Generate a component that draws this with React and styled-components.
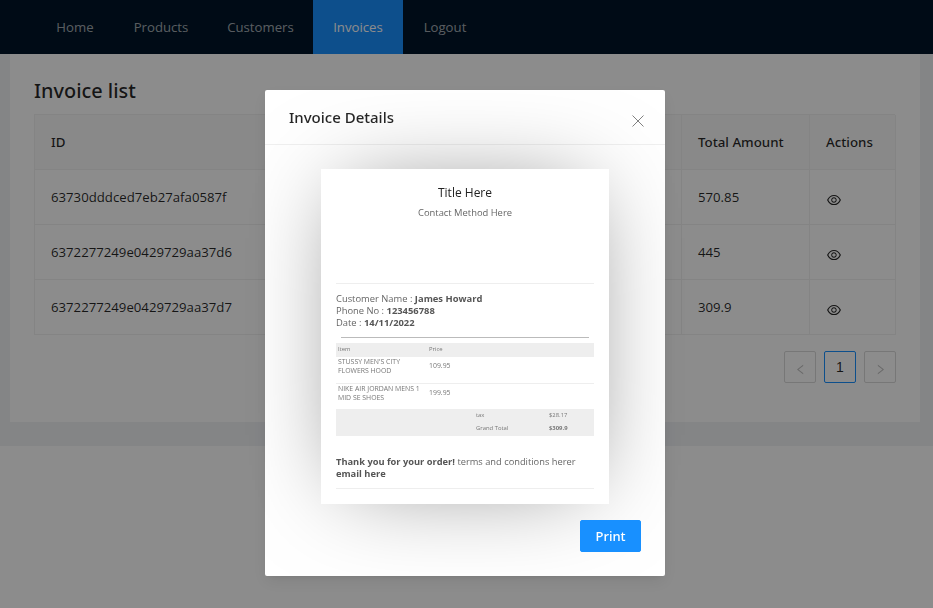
import styled, { createGlobalStyle } from 'styled-components'
import { AiOutlineEye, AiOutlineLeft, AiOutlineRight } from 'react-icons/ai'

const GlobalStyle = createGlobalStyle`
    html, body {
        margin: 0;
        height: 100%;
        overflow: hidden;
        background: #f0f2f5;
        font-family: "Open Sans", "Noto Sans", sans-serif;
        color: rgba(0, 0, 0, 0.85);
    }
    * { box-sizing: border-box; }
`

const Nav = styled.nav`
    display: flex;
    height: 54px;
    padding-left: 36px;
    background: #001529;
`

const NavItem = styled.a`
    display: flex;
    align-items: center;
    justify-content: center;
    height: 100%;
    width: ${props => props.$width}px;
    font-size: 13.2px;
    color: ${props => props.$active ? '#fff' : 'rgba(255, 255, 255, 0.65)'};
    background: ${props => props.$active ? '#1890ff' : 'transparent'};
`

const Panel = styled.main`
    height: 368px;
    margin: 0 13px 24px 10px;
    padding: 24px 24px 0;
    background: #fff;
`

const PageTitle = styled.h2`
    margin: 0 0 8px;
    height: 28px;
    font-family: "Noto Sans", sans-serif;
    font-size: 19.9px;
    line-height: 26px;
    font-weight: 500;
`

const Table = styled.div`
    display: grid;
    grid-template-columns: 647px 128px 86px;
    border-top: 1px solid #f0f0f0;
    border-left: 1px solid #f0f0f0;
    width: 861px;
`

const Cell = styled.div`
    display: flex;
    align-items: center;
    height: 55px;
    padding: 0 16px;
    font-family: ${props => props.$head ? '"Noto Sans", sans-serif' : 'inherit'};
    font-size: ${props => props.$head ? 13.3 : 13.2}px;
    font-weight: ${props => props.$head ? 500 : 400};
    background: ${props => props.$head ? '#fafafa' : '#fff'};
    border-right: 1px solid #f0f0f0;
    border-bottom: 1px solid #f0f0f0;
    svg { font-size: 16px; margin-top: 5px; }
`

const Row = styled.div`
    display: contents;
`

const Pager = styled.div`
    display: flex;
    justify-content: flex-end;
    gap: 8px;
    margin-top: 16px;
    width: 862px;
`

const PageButton = styled.div`
    display: flex;
    align-items: center;
    justify-content: center;
    width: 32px;
    height: 32px;
    border: 1px solid ${props => props.$active ? '#1890ff' : '#d9d9d9'};
    border-radius: 2px;
    font-family: "Liberation Sans", sans-serif;
    font-size: 14px;
    color: ${props => props.$active ? 'rgba(0, 0, 0, 0.85)' : 'rgba(0, 0, 0, 0.25)'};
    svg { font-size: 13px; margin-top: 5px; }
`

const Footer = styled.footer`
    height: 162px;
    background: #fff;
`

const Mask = styled.div`
    position: fixed;
    inset: 0;
    background: rgba(0, 0, 0, 0.45);
`

const Modal = styled.div`
    position: fixed;
    top: 90px;
    left: 265px;
    width: 400px;
    height: 486px;
    background: #fff;
    border-radius: 2px;
    box-shadow: 0 3px 6px -4px rgba(0, 0, 0, 0.12), 0 6px 16px rgba(0, 0, 0, 0.08);
`

const ModalHeader = styled.div`
    height: 55px;
    padding: 16px 24px;
    border-bottom: 1px solid #f0f0f0;
    font-family: "Noto Sans", sans-serif;
    font-size: 15px;
    line-height: 22px;
    font-weight: 500;
`

const CloseButton = styled.svg`
    position: absolute;
    top: 25px;
    right: 21px;
    width: 12px;
    height: 12px;
    stroke: #808080;
    stroke-width: 1;
    fill: none;
`

const ModalBody = styled.div`
    display: flex;
    justify-content: center;
    padding-top: 24px;
`

const Receipt = styled.div`
    width: 288px;
    height: 335px;
    padding: 16px 15px 0;
    background: #fff;
    color: #444;
    box-shadow: 0 0 96px -24px rgba(0, 0, 0, 0.5);
`

const ReceiptTitle = styled.div`
    font-size: 12px;
    line-height: 16px;
    text-align: center;
    color: #222;
`

const Contact = styled.div`
    margin-top: 5px;
    font-size: 9.4px;
    line-height: 14px;
    text-align: center;
    color: #666;
`

const Rule = styled.div`
    height: 1px;
    margin: ${props => props.$margin};
    background: ${props => props.$dark ? '#bbb' : '#eee'};
`

const Info = styled.div`
    margin-top: 9px;
    font-size: 9.4px;
    line-height: 12px;
    color: #666;
    b { font-weight: 700; color: #555; }
`

const ItemRow = styled.div`
    display: grid;
    grid-template-columns: 91px 47px 73px 47px;
    align-items: center;
    height: ${props => props.$height}px;
    padding: 0 0 ${props => props.$lift || 0}px 2px;
    font-size: ${props => props.$small ? 5.9 : 6.9}px;
    line-height: 8.2px;
    color: #777;
    background: ${props => props.$shaded ? '#eee' : 'transparent'};
    border-bottom: ${props => props.$line ? '1px solid #eee' : 'none'};
    span:first-child { padding-right: 2px; }
`

const Thanks = styled.div`
    margin-top: 20px;
    font-size: 9.3px;
    line-height: 12px;
    color: #666;
    b { font-weight: 700; color: #555; }
`

const ModalFooter = styled.div`
    display: flex;
    justify-content: flex-end;
    margin: 16px 24px 0 0;
`

const PrintButton = styled.button`
    width: 61px;
    height: 32px;
    border: 1px solid #1890ff;
    border-radius: 2px;
    background: #1890ff;
    color: #fff;
    font-family: "Noto Sans", sans-serif;
    font-size: 13px;
    font-weight: 500;
`

const navItems = [
    { label: 'Home', width: 78 },
    { label: 'Products', width: 94 },
    { label: 'Customers', width: 105 },
    { label: 'Invoices', width: 90, active: true },
    { label: 'Logout', width: 84 },
]

const invoices = [
    { id: '63730dddced7eb27afa0587f', total: '570.85' },
    { id: '6372277249e0429729aa37d6', total: '445' },
    { id: '6372277249e0429729aa37d7', total: '309.9' },
]

function App() {
    return (
        <>
            <GlobalStyle />
            <Nav>
                {navItems.map(item => (
                    <NavItem key={item.label} $width={item.width} $active={item.active}>{item.label}</NavItem>
                ))}
            </Nav>
            <Panel>
                <PageTitle>Invoice list</PageTitle>
                <Table>
                    <Cell $head>ID</Cell>
                    <Cell $head>Total Amount</Cell>
                    <Cell $head>Actions</Cell>
                    {invoices.map(row => (
                        <Row key={row.id}>
                            <Cell>{row.id}</Cell>
                            <Cell>{row.total}</Cell>
                            <Cell><AiOutlineEye /></Cell>
                        </Row>
                    ))}
                </Table>
                <Pager>
                    <PageButton><AiOutlineLeft /></PageButton>
                    <PageButton $active>1</PageButton>
                    <PageButton><AiOutlineRight /></PageButton>
                </Pager>
            </Panel>
            <Footer />
            <Mask />
            <Modal>
                <ModalHeader>Invoice Details</ModalHeader>
                <CloseButton viewBox="0 0 12 12"><path d="M0.5 0.5 L11.5 11.5 M11.5 0.5 L0.5 11.5" /></CloseButton>
                <ModalBody>
                    <Receipt>
                        <ReceiptTitle>Title Here</ReceiptTitle>
                        <Contact>Contact Method Here</Contact>
                        <Rule $margin="63px 0 0" />
                        <Info>
                            Customer Name : <b>James Howard</b><br />
                            Phone No : <b>123456788</b><br />
                            Date : <b>14/11/2022</b>
                        </Info>
                        <Rule $margin="8px 5px 5px" $dark />
                        <ItemRow $height={14} $lift={1} $small $shaded><span>Item</span><span>Price</span></ItemRow>
                        <ItemRow $height={27} $lift={7} $line><span>STUSSY MEN'S CITY FLOWERS HOOD</span><span>109.95</span></ItemRow>
                        <ItemRow $height={25} $lift={6}><span>NIKE AIR JORDAN MENS 1 MID SE SHOES</span><span>199.95</span></ItemRow>
                        <ItemRow $height={13} $small $shaded><span /><span /><span>tax</span><span>$28.17</span></ItemRow>
                        <ItemRow $height={14} $lift={1} $small $shaded><span /><span /><span>Grand Total</span><b>$309.9</b></ItemRow>
                        <Thanks><b>Thank you for your order!</b> terms and conditions herer <b>email here</b></Thanks>
                        <Rule $margin="8px 0 0" />
                    </Receipt>
                </ModalBody>
                <ModalFooter><PrintButton>Print</PrintButton></ModalFooter>
            </Modal>
        </>
    )
}

export default App
